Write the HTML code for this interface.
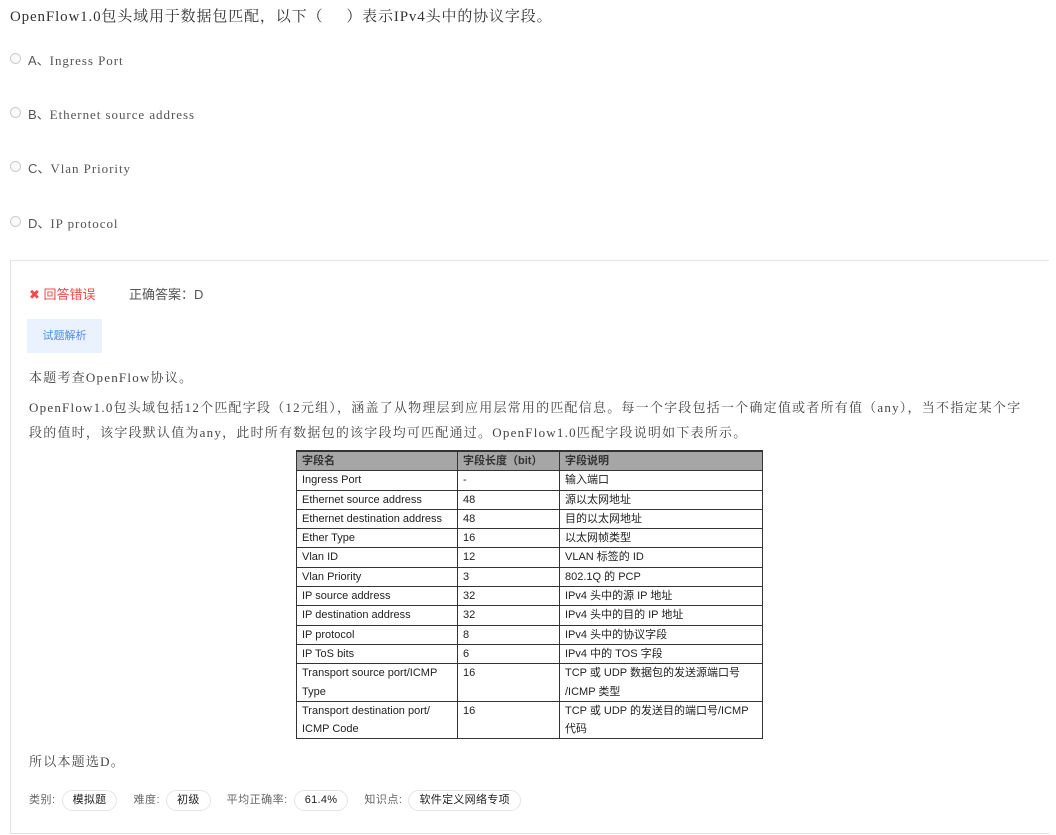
<!DOCTYPE html>
<html><head><meta charset="utf-8"><style>
*{margin:0;padding:0;box-sizing:border-box}
body{width:1056px;height:835px;background:#fff;position:relative;overflow:hidden;font-family:"Liberation Serif","Noto Serif CJK SC",serif;color:#333}
.a{position:absolute;white-space:nowrap}
.q{left:10px;top:5px;font-size:15px;letter-spacing:0.85px;color:#333}
.opt{left:10px;font-size:13px;color:#555;letter-spacing:0.95px}
.opt i{display:inline-block;width:11px;height:11px;border:1px solid #ccc;border-radius:50%;vertical-align:1px;margin-right:7px;background:#fafafa}
.opt b{font-weight:normal;font-family:"Liberation Sans","Noto Sans CJK SC",sans-serif;letter-spacing:0}
.box{left:10px;top:260px;width:1039px;height:574px;border:1px solid #e2e2e2;border-right:none}
.sans{font-family:"Liberation Sans","Noto Sans CJK SC",sans-serif}
.p{font-size:13px;color:#444;letter-spacing:1.22px}
table{position:absolute;left:296px;top:450px;border-collapse:collapse;font-family:"Liberation Sans","Noto Sans CJK SC",sans-serif;font-size:11px;color:#222}
td,th{border:1px solid #333;padding:0 5px;height:18.2px;text-align:left;vertical-align:top;line-height:18.3px}
th{background:#a6a6a6;font-weight:bold;color:#333;border-width:2px 1px 1px 1px;height:19px}
.tag{display:inline-block;border:1px solid #e5e5e5;border-radius:12px;padding:0 10px;height:21px;line-height:19px;color:#222;margin:0 16px 0 6px;letter-spacing:0.3px}
</style></head><body>
<div class="a q">OpenFlow1.0包头域用于数据包匹配，以下（&nbsp;&nbsp;&nbsp;&nbsp;&nbsp;）表示IPv4头中的协议字段。</div>
<div class="a opt" style="top:50px"><i></i><b>A、</b>Ingress Port</div>
<div class="a opt" style="top:104px"><i></i><b>B、</b>Ethernet source address</div>
<div class="a opt" style="top:158px"><i></i><b>C、</b>Vlan Priority</div>
<div class="a opt" style="top:213px"><i></i><b>D、</b>IP protocol</div>
<div class="a box"></div>
<div class="a sans" style="left:29px;top:284px;font-size:13px;color:#f5484a">✖ 回答错误</div>
<div class="a sans" style="left:129px;top:284px;font-size:13px;color:#555">正确答案：D</div>
<div class="a sans" style="left:27px;top:319px;width:75px;height:34px;background:#ebf2ff;color:#4f8af0;font-size:11px;line-height:34px;text-align:center">试题解析</div>
<div class="a p" style="left:29px;top:367px">本题考查OpenFlow协议。</div>
<div class="a p" style="left:29px;top:397px">OpenFlow1.0包头域包括12个匹配字段（12元组），涵盖了从物理层到应用层常用的匹配信息。每一个字段包括一个确定值或者所有值（any），当不指定某个字</div>
<div class="a p" style="left:29px;top:422px">段的值时，该字段默认值为any，此时所有数据包的该字段均可匹配通过。OpenFlow1.0匹配字段说明如下表所示。</div>
<table>
<tr><th style="width:161px">字段名</th><th style="width:102px">字段长度（bit）</th><th style="width:203px">字段说明</th></tr>
<tr><td>Ingress Port</td><td>-</td><td>输入端口</td></tr>
<tr><td>Ethernet source address</td><td>48</td><td>源以太网地址</td></tr>
<tr><td>Ethernet destination address</td><td>48</td><td>目的以太网地址</td></tr>
<tr><td>Ether Type</td><td>16</td><td>以太网帧类型</td></tr>
<tr><td>Vlan ID</td><td>12</td><td>VLAN 标签的 ID</td></tr>
<tr><td>Vlan Priority</td><td>3</td><td>802.1Q 的 PCP</td></tr>
<tr><td>IP source address</td><td>32</td><td>IPv4 头中的源 IP 地址</td></tr>
<tr><td>IP destination address</td><td>32</td><td>IPv4 头中的目的 IP 地址</td></tr>
<tr><td>IP protocol</td><td>8</td><td>IPv4 头中的协议字段</td></tr>
<tr><td>IP ToS bits</td><td>6</td><td>IPv4 中的 TOS 字段</td></tr>
<tr><td>Transport source port/ICMP<br>Type</td><td>16</td><td>TCP 或 UDP 数据包的发送源端口号<br>/ICMP 类型</td></tr>
<tr><td>Transport destination port/<br>ICMP Code</td><td>16</td><td>TCP 或 UDP 的发送目的端口号/ICMP<br>代码</td></tr>
</table>
<div class="a p" style="left:29px;top:751px">所以本题选D。</div>
<div class="a sans" style="left:29px;top:790px;font-size:11px;color:#666;letter-spacing:0.5px">类别:<span class="tag">模拟题</span>难度:<span class="tag">初级</span>平均正确率:<span class="tag">61.4%</span>知识点:<span class="tag">软件定义网络专项</span></div>
</body></html>
